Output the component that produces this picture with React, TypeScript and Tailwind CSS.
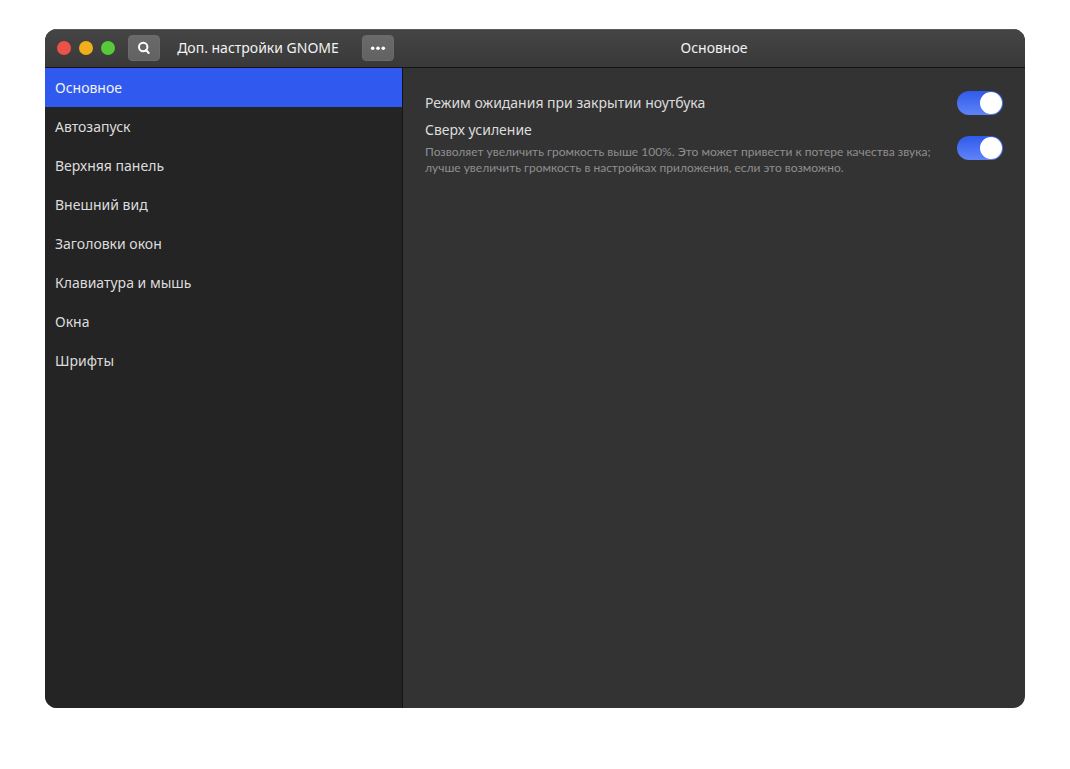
import { useState } from "react";

const sections = [
  "Основное",
  "Автозапуск",
  "Верхняя панель",
  "Внешний вид",
  "Заголовки окон",
  "Клавиатура и мышь",
  "Окна",
  "Шрифты",
];

function Toggle({ id, describedBy }: { id: string; describedBy?: string }) {
  const [on, setOn] = useState(true);
  return (
    <label
      className={
        "flex h-6 w-[46px] shrink-0 cursor-pointer items-center rounded-full p-px " +
        (on
          ? "justify-end bg-linear-to-b from-[#305aeb] to-[#5f83f8]"
          : "justify-start bg-[#222222]")
      }
    >
      <input
        id={id}
        type="checkbox"
        role="switch"
        aria-describedby={describedBy}
        checked={on}
        onChange={() => setOn(!on)}
        className="sr-only"
      />
      <span className="size-[22px] rounded-full bg-white" />
    </label>
  );
}

const headerButton =
  "flex h-[26px] w-8 shrink-0 items-center justify-center rounded-[4px] border border-[#6b6b6b] bg-linear-to-b from-[#6a6a6a] to-[#626262] text-white";

export default function App() {
  const [active, setActive] = useState(0);
  return (
    <div className="flex min-h-screen bg-white px-[45px] pt-[29px] pb-[61px] font-['Noto_Sans',sans-serif] text-sm text-[#dcdcdc]">
      <div className="flex flex-1 flex-col overflow-hidden rounded-xl bg-[#333333]">
        <header className="flex h-[39px] shrink-0 border-b border-b-[#141414] bg-linear-to-b from-[#454545] to-[#393939] text-[#f2f2f2] inset-shadow-[0_1px_#5a5a5a]">
          <div className="flex w-[358px] shrink-0 items-center pr-[9px] pl-3">
            <div className="flex gap-2">
              <button type="button" aria-label="Закрыть" className="size-3.5 rounded-full bg-[#ec514a]" />
              <button type="button" aria-label="Свернуть" className="size-3.5 rounded-full bg-[#f3ae1b]" />
              <button type="button" aria-label="Развернуть" className="size-3.5 rounded-full bg-[#58c938]" />
            </div>
            <button type="button" aria-label="Поиск" className={headerButton + " ml-[13px]"}>
              <svg viewBox="0 0 16 16" className="size-4" fill="none" stroke="currentColor" strokeWidth="2">
                <circle cx="7.2" cy="7" r="4.2" />
                <path d="M10 10l2.7 3" strokeLinecap="round" />
              </svg>
            </button>
            <h1 className="flex-1 pr-1.5 text-center whitespace-nowrap">Доп. настройки GNOME</h1>
            <button type="button" aria-label="Меню" className={headerButton}>
              <svg viewBox="0 0 16 16" className="size-4" fill="currentColor">
                <circle cx="2.7" cy="8.2" r="1.8" />
                <circle cx="8" cy="8.2" r="1.8" />
                <circle cx="13.3" cy="8.2" r="1.8" />
              </svg>
            </button>
          </div>
          <h2 className="flex flex-1 items-center justify-center">{sections[active]}</h2>
        </header>
        <div className="flex flex-1">
          <nav className="w-[358px] shrink-0 border-r border-[#141414] bg-[#242424]">
            {sections.map((name, i) => (
              <button
                key={name}
                type="button"
                onClick={() => setActive(i)}
                aria-current={i === active ? "page" : undefined}
                className={
                  "flex h-[39px] w-full items-center px-2.5 " +
                  (i === active ? "bg-[#305aef] text-[#f2f2f2]" : "")
                }
              >
                {name}
              </button>
            ))}
          </nav>
          <main className="flex-1 px-[22px] pt-[23px]">
            <div className="flex items-center justify-between">
              <label htmlFor="suspend">Режим ожидания при закрытии ноутбука</label>
              <Toggle id="suspend" />
            </div>
            <div className="mt-1 flex items-center justify-between gap-5">
              <div>
                <label htmlFor="boost" className="block leading-[22px]">
                  Сверх усиление
                </label>
                <p id="boost-hint" className="mt-[3px] font-[Lato,'Noto_Sans',sans-serif] text-xs leading-4 text-[#8f8f8f]">
                  Позволяет увеличить громкость выше 100%. Это может привести к потере качества звука; лучше увеличить
                  громкость в настройках приложения, если это возможно.
                </p>
              </div>
              <Toggle id="boost" describedBy="boost-hint" />
            </div>
          </main>
        </div>
      </div>
    </div>
  );
}
